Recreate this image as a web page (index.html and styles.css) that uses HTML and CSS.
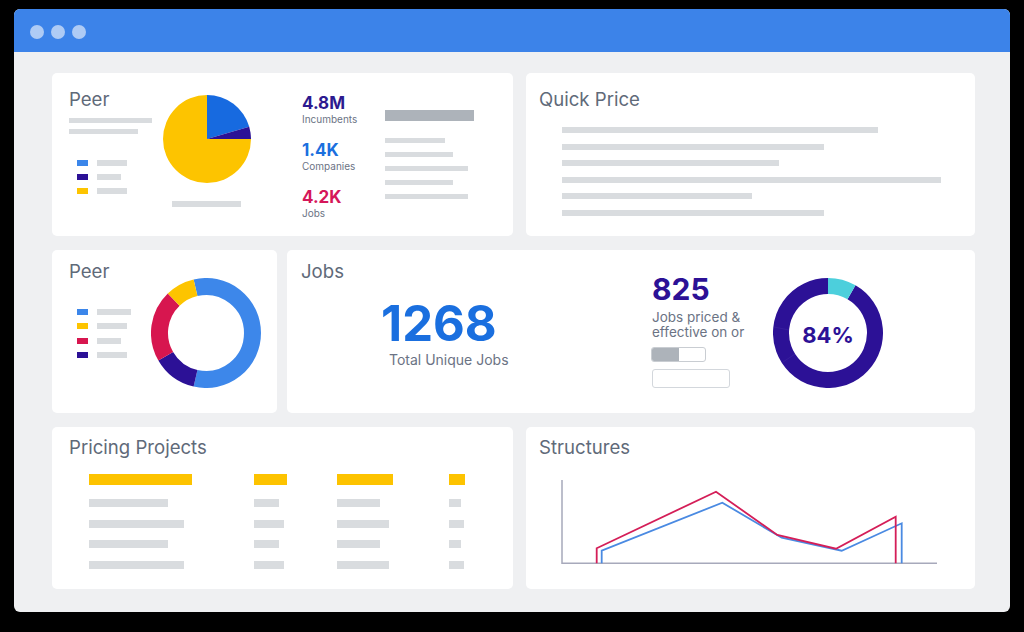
FILE: index.html
```html
<!DOCTYPE html>
<html lang="en">
<head>
<meta charset="utf-8">
<title>Dashboard</title>
<link rel="stylesheet" href="styles.css">
</head>
<body>
<div class="window">
  <div class="titlebar"><span class="dot"></span><span class="dot"></span><span class="dot"></span></div>
  <div class="content">
    <div class="row row-a">
      <section class="card card-peer">
        <div class="peer-left">
          <h2 class="title">Peer</h2>
          <div class="peer-lines">
            <span class="skel h5" style="width:83px"></span>
            <span class="skel h5" style="width:69px"></span>
          </div>
          <ul class="legend legend-3">
            <li><span class="sw c-blue-l"></span><span class="skel h6" style="width:30px"></span></li>
            <li><span class="sw c-indigo"></span><span class="skel h6" style="width:24px"></span></li>
            <li><span class="sw c-yellow"></span><span class="skel h6" style="width:30px"></span></li>
          </ul>
        </div>
        <div class="pie-col">
          <svg width="88" height="88" viewBox="0 0 88 88">
            <path d="M44,44 L88,44 A44,44 0 1 1 44,0 Z" fill="#fdc400"/>
            <path d="M44,44 L44,0 A44,44 0 0 1 86.23,31.65 Z" fill="#176ae0"/>
            <path d="M44,44 L86.23,31.65 A44,44 0 0 1 88,44 Z" fill="#2c1196"/>
          </svg>
          <span class="skel h6 pie-caption" style="width:69px"></span>
        </div>
        <div class="stats">
          <div class="stat"><div class="stat-value t-indigo">4.8M</div><div class="stat-label">Incumbents</div></div>
          <div class="stat"><div class="stat-value t-blue">1.4K</div><div class="stat-label">Companies</div></div>
          <div class="stat"><div class="stat-value t-red">4.2K</div><div class="stat-label">Jobs</div></div>
        </div>
        <div class="bars">
          <span class="skel-dark"></span>
          <div class="bars-list">
            <span class="skel h5" style="width:60px"></span>
            <span class="skel h5" style="width:68px"></span>
            <span class="skel h5" style="width:83px"></span>
            <span class="skel h5" style="width:68px"></span>
            <span class="skel h5" style="width:83px"></span>
          </div>
        </div>
      </section>
      <section class="card card-quick">
        <h2 class="title">Quick Price</h2>
        <div class="quick-lines">
          <span class="skel h6" style="width:316px"></span>
          <span class="skel h6" style="width:262px"></span>
          <span class="skel h6" style="width:217px"></span>
          <span class="skel h6" style="width:379px"></span>
          <span class="skel h6" style="width:190px"></span>
          <span class="skel h6" style="width:262px"></span>
        </div>
      </section>
    </div>
    <div class="row row-b">
      <section class="card card-peer2">
        <div class="peer2-left">
          <h2 class="title">Peer</h2>
          <ul class="legend legend-4">
            <li><span class="sw c-blue-l"></span><span class="skel h6" style="width:34px"></span></li>
            <li><span class="sw c-yellow"></span><span class="skel h6" style="width:30px"></span></li>
            <li><span class="sw c-red"></span><span class="skel h6" style="width:24px"></span></li>
            <li><span class="sw c-indigo"></span><span class="skel h6" style="width:30px"></span></li>
          </ul>
        </div>
        <div class="donut-col">
          <svg width="110" height="110" viewBox="0 0 110 110" fill="none" stroke-width="17">
            <path d="M44.54,9.69 A46.5,46.5 0 1 1 44.54,100.31" stroke="#3d87ea"/>
            <path d="M44.54,100.31 A46.5,46.5 0 0 1 14.73,78.25" stroke="#2c1196"/>
            <path d="M14.73,78.25 A46.5,46.5 0 0 1 22.70,21.55" stroke="#d7164f"/>
            <path d="M22.70,21.55 A46.5,46.5 0 0 1 44.54,9.69" stroke="#fdc400"/>
          </svg>
        </div>
      </section>
      <section class="card card-jobs">
        <div class="jobs-main">
          <h2 class="title">Jobs</h2>
          <div class="big">
            <div class="big-value">1268</div>
            <div class="big-label">Total Unique Jobs</div>
          </div>
        </div>
        <div class="jobs-side">
          <div class="side-value">825</div>
          <div class="side-label">Jobs priced &amp;<br>effective on or</div>
          <div class="toggle"><span class="toggle-fill"></span></div>
          <div class="field"></div>
        </div>
        <div class="ring-col">
          <svg width="110" height="110" viewBox="0 0 110 110" fill="none" stroke-width="16">
            <path d="M78.5,14.3 A47,47 0 1 1 55,8" stroke="#2c1196"/>
            <path d="M55,8 A47,47 0 0 1 78.5,14.3" stroke="#4ccfdc"/>
            <path d="M1,49 L16,52" stroke="#3e27a0" stroke-width="0.6"/>
            <path d="M10,84 L22,76" stroke="#3e27a0" stroke-width="0.6"/>
          </svg>
          <div class="ring-value">84%</div>
        </div>
      </section>
    </div>
    <div class="row row-c">
      <section class="card card-pricing">
        <h2 class="title">Pricing Projects</h2>
        <div class="ptable">
          <span class="hd" style="width:103px"></span>
          <span class="hd" style="width:33px"></span>
          <span class="hd" style="width:56px"></span>
          <span class="hd" style="width:16px"></span>
          <span class="cell" style="width:79px"></span>
          <span class="cell" style="width:25px"></span>
          <span class="cell" style="width:43px"></span>
          <span class="cell" style="width:12px"></span>
          <span class="cell" style="width:95px"></span>
          <span class="cell" style="width:30px"></span>
          <span class="cell" style="width:52px"></span>
          <span class="cell" style="width:15px"></span>
          <span class="cell" style="width:79px"></span>
          <span class="cell" style="width:25px"></span>
          <span class="cell" style="width:43px"></span>
          <span class="cell" style="width:12px"></span>
          <span class="cell" style="width:95px"></span>
          <span class="cell" style="width:30px"></span>
          <span class="cell" style="width:52px"></span>
          <span class="cell" style="width:15px"></span>
        </div>
      </section>
      <section class="card card-struct">
        <h2 class="title">Structures</h2>
        <svg class="chart" width="380" height="88" viewBox="0 0 380 88" fill="none">
          <path d="M2,2 L2,85.3 L377,85.3" stroke="#a7a9bb" stroke-width="1.5"/>
          <path d="M41.7,85.3 L41.7,72.7 L162.3,24.7 L221.7,59.7 L281.7,72.7 L341.7,45.3 L341.7,85.3" stroke="#4a8ae2" stroke-width="1.8"/>
          <path d="M36.7,85.3 L36.7,70.3 L156,13.7 L217.3,57 L276,70.7 L335.7,38.7 L335.7,85.3" stroke="#d41e58" stroke-width="1.8"/>
        </svg>
      </section>
    </div>
  </div>
</div>
</body>
</html>
```

FILE: styles.css
```css
* { box-sizing: border-box; }

body {
  margin: 0;
  background: #000;
  font-family: Inter, "Noto Sans", sans-serif;
}

.window {
  margin: 9px 0 0 14px;
  width: 996px;
  height: 603px;
  border-radius: 6px;
  background: #eff0f2;
  overflow: hidden;
}

.titlebar {
  height: 43px;
  background: #3c83e9;
  display: flex;
  align-items: center;
  gap: 7px;
  padding: 3px 0 0 16px;
}

.dot {
  width: 14px;
  height: 14px;
  border-radius: 50%;
  background: #aecbf5;
}

.content {
  padding: 21px 35px 23px 38px;
  display: flex;
  flex-direction: column;
  gap: 14px;
}

.row { display: grid; }
.row-a { grid-template-columns: 461px 449px; column-gap: 13px; height: 163px; }
.row-b { grid-template-columns: 225px 688px; column-gap: 10px; height: 163px; }
.row-c { grid-template-columns: 461px 449px; column-gap: 13px; height: 162px; }

.card {
  background: #fff;
  border-radius: 5px;
  display: flex;
  align-items: flex-start;
}

.title {
  margin: 0;
  font-size: 18.6px;
  line-height: 22px;
  font-weight: 400;
  color: #5f6a79;
  white-space: nowrap;
}

.skel { display: block; background: #d9dcdf; }
.h5 { height: 5px; }
.h6 { height: 6px; }

.c-blue-l { background: #3b86ea; }
.c-indigo { background: #2c1196; }
.c-yellow { background: #fdc400; }
.c-red { background: #d7164f; }

.t-indigo { color: #2c1a8f; }
.t-blue { color: #1b6fde; }
.t-red { color: #d5175a; }

/* Peer card (row 1) */
.card-peer { padding: 15px 0 0 17px; }
.peer-left { width: 94px; }
.peer-lines {
  display: flex;
  flex-direction: column;
  gap: 6px;
  margin-top: 8px;
}
.legend {
  list-style: none;
  margin: 26px 0 0 8px;
  padding: 0;
  display: flex;
  flex-direction: column;
  gap: 8px;
}
.legend li {
  display: flex;
  align-items: center;
  gap: 9px;
  height: 6px;
}
.sw { width: 11px; height: 6px; }

.pie-col { width: 88px; margin-top: 7px; }
.pie-col svg { display: block; }
.pie-caption { margin: 18px 0 0 9px; }

.stats { width: 83px; margin: 5px 0 0 51px; }
.stat + .stat { margin-top: 14px; }
.stat-value { font-size: 17px; line-height: 20px; font-weight: 700; }
.stat-label { font-size: 10px; line-height: 13px; color: #6b7384; }

.bars { margin-top: 22px; display: flex; flex-direction: column; }
.skel-dark { display: block; width: 89px; height: 11px; background: #adb3ba; }
.bars-list {
  margin-top: 17px;
  display: flex;
  flex-direction: column;
  gap: 9px;
}

/* Quick price */
.card-quick { padding: 15px 13px 0; flex-direction: column; }
.quick-lines {
  margin: 17px 0 0 23px;
  display: flex;
  flex-direction: column;
  gap: 10.6px;
}

/* Peer card (row 2) */
.card-peer2 { padding: 10px 0 0 17px; }
.peer2-left { width: 82px; }
.legend-4 { margin-top: 27px; gap: 8.33px; }
.donut-col { margin-top: 18px; }
.donut-col svg { display: block; }

/* Jobs */
.card-jobs { padding: 10px 0 0 14px; }
.jobs-main { width: 351px; }
.big { margin: 18px 0 0 80px; }
.big-value {
  font-size: 49px;
  line-height: 48px;
  font-weight: 700;
  color: #1a6fdf;
}
.big-label {
  margin: 4px 0 0 8px;
  font-size: 14px;
  line-height: 16px;
  color: #6b7384;
  white-space: nowrap;
}

.jobs-side { width: 121px; margin-top: 14px; }
.side-value {
  font-size: 30px;
  line-height: 30px;
  font-weight: 700;
  color: #2c1196;
}
.side-label {
  margin-top: 5.5px;
  font-size: 13.5px;
  line-height: 15px;
  color: #6b7384;
  white-space: nowrap;
}
.toggle {
  margin: 7.5px 0 0 -1px;
  width: 55px;
  height: 15px;
  border: 1px solid #c9cdd2;
  border-radius: 3px;
  overflow: hidden;
  display: flex;
}
.toggle-fill { width: 27px; background: #adb3ba; }
.field {
  margin-top: 7px;
  width: 78px;
  height: 19px;
  border: 1px solid #d3d7dc;
  border-radius: 3px;
}

.ring-col {
  margin-top: 18px;
  display: grid;
  place-items: center;
}
.ring-col > * { grid-area: 1 / 1; }
.ring-col svg { display: block; }
.ring-value {
  padding-top: 4px;
  font-size: 22px;
  line-height: 24px;
  font-weight: 700;
  color: #2c1196;
}

/* Pricing projects */
.card-pricing { padding: 9px 0 0 17px; flex-direction: column; }
.ptable {
  margin: 16px 0 0 20px;
  display: grid;
  grid-template-columns: 165px 83px 112px 20px;
  row-gap: 12.5px;
}
.ptable .hd { display: block; height: 11px; background: #fdc300; margin-bottom: 1.5px; }
.ptable .cell { display: block; height: 8px; background: #d9dcdf; }

/* Structures */
.card-struct { padding: 9px 13px 0; flex-direction: column; }
.chart { margin: 20px 0 0 21px; display: block; }
```
